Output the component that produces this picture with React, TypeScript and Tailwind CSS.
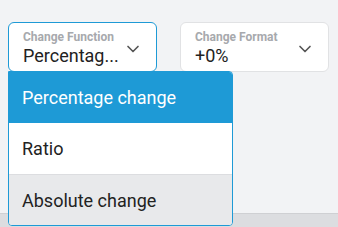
import { ChevronDown } from "lucide-react";

function Select({ label, value, active }: { label: string; value: string; active?: boolean }) {
    return (
        <div className={"w-[149px] h-[50px] bg-white rounded-[6px] border flex items-start pt-[7px] pl-[14px] pr-[13px] " + (active ? "border-[#1e9ad6]" : "border-[#e1e2e4]")}>
            <div className="flex-1 flex flex-col min-w-0">
                <span className="text-[12px] leading-[14px] font-bold text-[#a7a9ad]">{label}</span>
                <span className="text-[18px] leading-[22px] mt-[1px] text-[#222]">{value}</span>
            </div>
            <ChevronDown size={20} strokeWidth={2} className="text-[#555] mt-[9px]" />
        </div>
    );
}

export default function App() {
    return (
        <div className="w-[338px] h-[227px] bg-[#f2f3f5] flex flex-col relative overflow-hidden" style={{ fontFamily: "Roboto, sans-serif" }}>
            <div className="flex-1 flex gap-[23px] px-[8px] pt-[22px]">
                <Select label="Change Function" value="Percentag..." active />
                <Select label="Change Format" value="+0%" />
            </div>
            <div className="h-[14px] bg-[#dcdde0] border-t border-[#cfd0d3]"></div>
            <div className="absolute left-[8px] top-[71px] w-[225px] h-[155px] bg-white border border-[#1e9ad6] rounded-b-[4px] rounded-tr-[4px] overflow-hidden flex flex-col">
                <div className="h-[51px] bg-[#1e9ad6] text-white text-[18px] flex items-center px-[13px]">Percentage change</div>
                <div className="h-[51px] text-[#222] text-[18px] flex items-center px-[13px]">Ratio</div>
                <div className="flex-1 bg-[#e8e9eb] border-t border-[#dcdde0] text-[#222] text-[18px] flex items-center px-[13px]">Absolute change</div>
            </div>
        </div>
    );
}
